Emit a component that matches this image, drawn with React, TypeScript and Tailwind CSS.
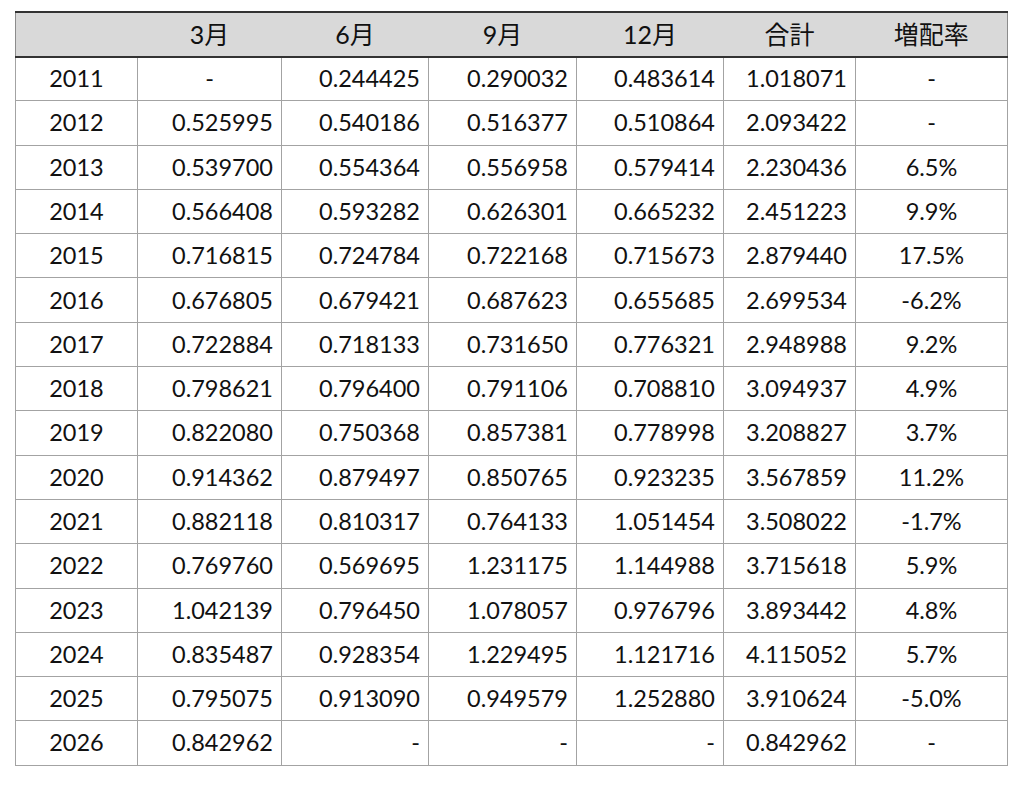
const header = ["", "3月", "6月", "9月", "12月", "合計", "増配率"];

const rows: string[][] = [
  ["2011", "-", "0.244425", "0.290032", "0.483614", "1.018071", "-"],
  ["2012", "0.525995", "0.540186", "0.516377", "0.510864", "2.093422", "-"],
  ["2013", "0.539700", "0.554364", "0.556958", "0.579414", "2.230436", "6.5%"],
  ["2014", "0.566408", "0.593282", "0.626301", "0.665232", "2.451223", "9.9%"],
  ["2015", "0.716815", "0.724784", "0.722168", "0.715673", "2.879440", "17.5%"],
  ["2016", "0.676805", "0.679421", "0.687623", "0.655685", "2.699534", "-6.2%"],
  ["2017", "0.722884", "0.718133", "0.731650", "0.776321", "2.948988", "9.2%"],
  ["2018", "0.798621", "0.796400", "0.791106", "0.708810", "3.094937", "4.9%"],
  ["2019", "0.822080", "0.750368", "0.857381", "0.778998", "3.208827", "3.7%"],
  ["2020", "0.914362", "0.879497", "0.850765", "0.923235", "3.567859", "11.2%"],
  ["2021", "0.882118", "0.810317", "0.764133", "1.051454", "3.508022", "-1.7%"],
  ["2022", "0.769760", "0.569695", "1.231175", "1.144988", "3.715618", "5.9%"],
  ["2023", "1.042139", "0.796450", "1.078057", "0.976796", "3.893442", "4.8%"],
  ["2024", "0.835487", "0.928354", "1.229495", "1.121716", "4.115052", "5.7%"],
  ["2025", "0.795075", "0.913090", "0.949579", "1.252880", "3.910624", "-5.0%"],
  ["2026", "0.842962", "-", "-", "-", "0.842962", "-"],
];

const widths = ["w-[122px]", "w-[144px]", "w-[147px]", "w-[148px]", "w-[147px]", "w-[132px]", "w-[152px]"];

function cellAlign(col: number, value: string, rowIdx: number) {
  if (col === 0 || col === 6) return "text-center";
  // the lone dash in the first row sits centred, the 2026 dashes sit right
  if (value === "-" && rowIdx === 0) return "text-center";
  return "text-right pr-[8px]";
}

function headerEdge(i: number) {
  if (i === 0) return "border-l border-l-[#8c8c8c]";
  if (i === header.length - 1) return "border-r border-r-[#8c8c8c]";
  return "";
}

export default function App() {
  return (
    <div className="min-h-[786px] bg-white pl-[15px] pt-[11px] font-['Lato','Noto_Sans_CJK_JP',sans-serif] text-[#111111]">
      <table className="w-[992px] table-fixed border-collapse text-[23.5px]">
        <colgroup>
          {widths.map((w, i) => (
            <col key={i} className={w} />
          ))}
        </colgroup>
        <thead>
          <tr className="h-[44.5px] bg-[#d9d9d9]">
            {header.map((h, i) => (
              <th
                key={i}
                className={`border-t-2 border-t-[#333333] border-b-2 border-b-[#333333] p-0 text-center text-[25px] font-normal ${headerEdge(i)}`}
              >
                {h}
              </th>
            ))}
          </tr>
        </thead>
        <tbody>
          {rows.map((r, ri) => (
            <tr key={r[0]} className="h-[44.3px]">
              {r.map((v, ci) => (
                <td key={ci} className={`border border-[#a3a3a3] p-0 ${cellAlign(ci, v, ri)}`}>
                  {v}
                </td>
              ))}
            </tr>
          ))}
        </tbody>
      </table>
    </div>
  );
}
